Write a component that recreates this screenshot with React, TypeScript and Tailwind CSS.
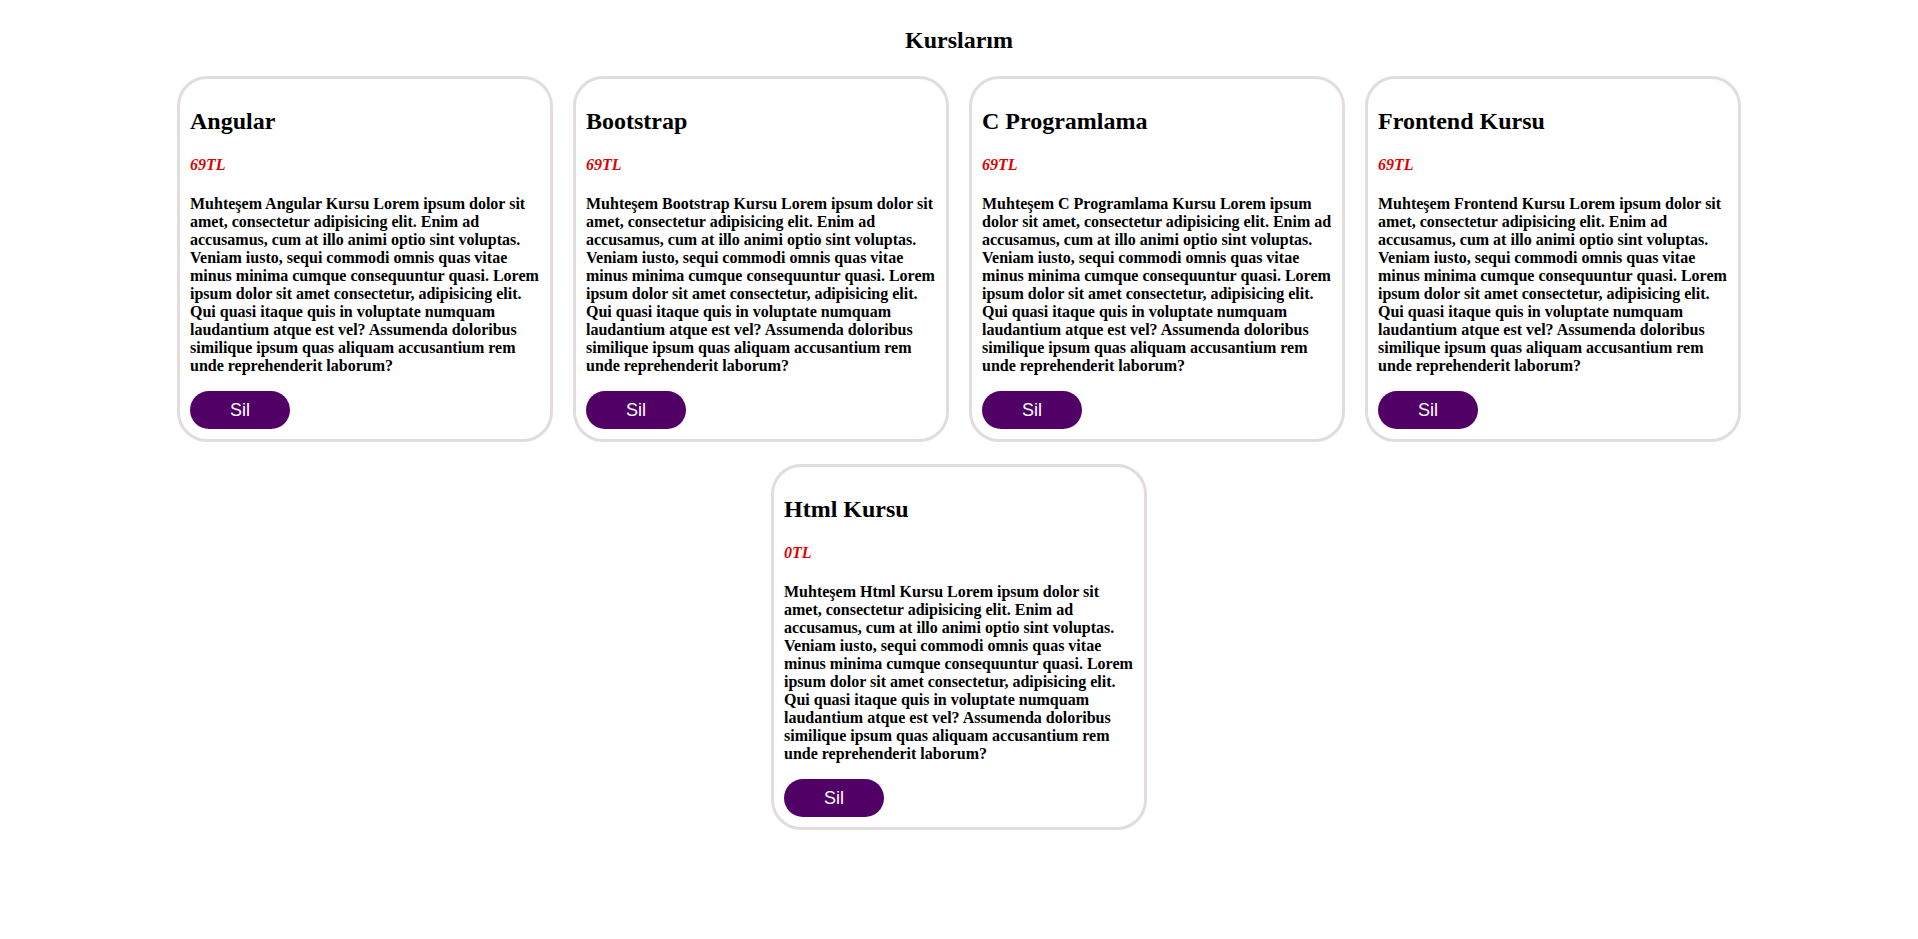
const lorem =
  "Lorem ipsum dolor sit amet, consectetur adipisicing elit. Enim ad accusamus, cum at illo animi optio sint voluptas. Veniam iusto, sequi commodi omnis quas vitae minus minima cumque consequuntur quasi. Lorem ipsum dolor sit amet consectetur, adipisicing elit. Qui quasi itaque quis in voluptate numquam laudantium atque est vel? Assumenda doloribus similique ipsum quas aliquam accusantium rem unde reprehenderit laborum?";

const courses = [
  { name: "Angular", full: "Angular Kursu", price: 69 },
  { name: "Bootstrap", full: "Bootstrap Kursu", price: 69 },
  { name: "C Programlama", full: "C Programlama Kursu", price: 69 },
  { name: "Frontend Kursu", full: "Frontend Kursu", price: 69 },
  { name: "Html Kursu", full: "Html Kursu", price: 0 },
];

const CourseCard = ({
  name,
  full,
  price,
}: {
  name: string;
  full: string;
  price: number;
}) => {
  return (
    <div className="w-[376px] border-[3px] border-[#e3dcdc] rounded-[30px] p-[10px] bg-white">
      <h2 className="mt-[18px] text-[24px] leading-[28px] font-bold">{name}</h2>
      <h4 className="mt-[21px] text-[16px] leading-[18px] font-bold italic text-[#e00000]">
        {price}TL
      </h4>
      <p className="mt-[21px] text-[16px] leading-[18px] font-bold">
        Muhteşem {full} {lorem}
      </p>
      <button className="mt-[16px] w-[100px] h-[38px] rounded-full bg-[#510066] text-white text-[18px] font-['Liberation_Sans',Arial,sans-serif]">
        Sil
      </button>
    </div>
  );
};

export default function App() {
  return (
    <div className="min-h-screen bg-white text-black pt-[26px] font-['Liberation_Serif','Times_New_Roman',serif]">
      <h1 className="text-center text-[24px] leading-[28px] font-bold">Kurslarım</h1>
      <div className="mt-[22px] flex flex-wrap justify-center gap-x-5 gap-y-[22px]">
        {courses.map((c) => (
          <CourseCard key={c.name} name={c.name} full={c.full} price={c.price} />
        ))}
      </div>
    </div>
  );
}
